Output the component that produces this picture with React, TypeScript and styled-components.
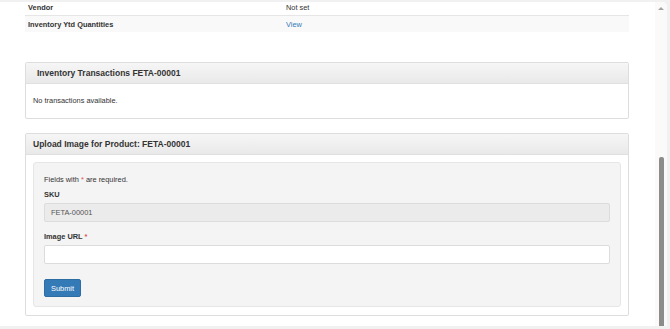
import React from 'react';
import styled, { createGlobalStyle } from 'styled-components';

const GlobalStyle = createGlobalStyle`
  html, body {
    margin: 0;
    padding: 0;
    background: #f1f1f1;
  }
  body {
    font-family: 'Liberation Sans', Arial, sans-serif;
    color: #333333;
  }
`;

const details = [
  { label: 'Vendor', value: 'Not set', link: false },
  { label: 'Inventory Ytd Quantities', value: 'View', link: true },
];

const App: React.FC = () => {
  return (
    <>
      <GlobalStyle />
      <Page>
        <Frame>
          <Content>
            <DetailTable>
              {details.map((row, i) => (
                <DetailRow key={row.label} striped={i % 2 === 1}>
                  <LabelCell>{row.label}</LabelCell>
                  <ValueCell>{row.link ? <Link href="#">{row.value}</Link> : row.value}</ValueCell>
                </DetailRow>
              ))}
            </DetailTable>

            <Panel spacing={30}>
              <PanelHeading indent={11}>
                <PanelTitle>Inventory Transactions FETA-00001</PanelTitle>
              </PanelHeading>
              <PanelBody>
                <EmptyText>No transactions available.</EmptyText>
              </PanelBody>
            </Panel>

            <Panel spacing={14}>
              <PanelHeading indent={7}>
                <PanelTitle>Upload Image for Product: FETA-00001</PanelTitle>
              </PanelHeading>
              <PanelBody>
                <Well>
                  <Note>
                    Fields with <Required>*</Required> are required.
                  </Note>
                  <Field>
                    <FieldLabel>SKU</FieldLabel>
                    <TextInput disabled value="FETA-00001" readOnly />
                  </Field>
                  <Field>
                    <FieldLabel>
                      Image URL <Required>*</Required>
                    </FieldLabel>
                    <TextInput defaultValue="" />
                  </Field>
                  <SubmitButton type="button">Submit</SubmitButton>
                </Well>
              </PanelBody>
            </Panel>
          </Content>

          <ScrollTrack>
            <ScrollArrow />
            <ScrollThumb />
          </ScrollTrack>
        </Frame>
      </Page>
    </>
  );
};

const Page = styled.div`
  height: 329px;
  width: 670px;
  padding: 2px 3px 3px 0;
  box-sizing: border-box;
  overflow: hidden;
`;

const Frame = styled.div`
  display: flex;
  height: 100%;
  background: #ffffff;
  border-top-right-radius: 5px;
  overflow: hidden;
`;

const Content = styled.div`
  flex: 1;
  padding: 0 26px 0 25px;
  margin-top: -4px;
  min-width: 0;
`;

const DetailTable = styled.div`
  display: flex;
  flex-direction: column;
`;

const DetailRow = styled.div<{ striped: boolean }>`
  display: grid;
  grid-template-columns: 261px 1fr;
  height: 16px;
  align-items: center;
  background: ${(p) => (p.striped ? '#f9f9f9' : 'transparent')};
  border-top: 1px solid ${(p) => (p.striped ? '#e6e6e6' : 'transparent')};
  font-size: 7.4px;
`;

const LabelCell = styled.div`
  padding-left: 3px;
  font-weight: bold;
  color: #333333;
`;

const ValueCell = styled.div`
  color: #333333;
`;

const Link = styled.a`
  color: #337ab7;
  text-decoration: none;
`;

const Panel = styled.div<{ spacing: number }>`
  border: 1px solid #dddddd;
  border-radius: 2px;
  margin-top: ${(p) => p.spacing}px;
`;

const PanelHeading = styled.div<{ indent: number }>`
  height: 20px;
  display: flex;
  align-items: center;
  padding-left: ${(p) => p.indent}px;
  background: linear-gradient(to bottom, #f6f6f6 0%, #e9e9e9 100%);
  border-bottom: 1px solid #e0e0e0;
`;

const PanelTitle = styled.h3`
  margin: 0;
  font-size: 8.5px;
  font-weight: bold;
  color: #333333;
`;

const PanelBody = styled.div`
  padding: 7px 7px 8px;
`;

const EmptyText = styled.p`
  margin: 5px 0 4px;
  font-size: 7.4px;
  line-height: 10px;
  color: #333333;
`;

const Well = styled.div`
  background: #f4f4f4;
  border: 1px solid #e6e6e6;
  border-radius: 3px;
  padding: 12px 10px 9px;
`;

const Note = styled.p`
  margin: 0 0 5px;
  font-size: 7.4px;
  line-height: 10px;
  color: #333333;
`;

const Required = styled.span`
  color: #d9534f;
`;

const Field = styled.div`
  display: flex;
  flex-direction: column;
  margin-bottom: 10px;
`;

const FieldLabel = styled.label`
  font-size: 7.4px;
  line-height: 10px;
  font-weight: bold;
  color: #333333;
  margin-bottom: 3px;
`;

const TextInput = styled.input`
  height: 19px;
  box-sizing: border-box;
  padding: 0 6px;
  border: 1px solid #dcdcdc;
  border-radius: 2px;
  background: #ffffff;
  font-family: 'Liberation Sans', Arial, sans-serif;
  font-size: 7.4px;
  color: #555555;
  outline: none;

  &:disabled {
    background: #ebebeb;
    color: #555555;
  }
`;

const SubmitButton = styled.button`
  margin-top: 15px;
  width: 37px;
  height: 18px;
  padding: 0;
  border: 1px solid #2e6da4;
  border-radius: 2px;
  background: #337ab7;
  color: #ffffff;
  font-family: 'Liberation Sans', Arial, sans-serif;
  font-size: 7.4px;
  display: block;
`;

const ScrollTrack = styled.div`
  width: 12px;
  background: #fafafa;
  display: flex;
  flex-direction: column;
  align-items: center;
`;

const ScrollArrow = styled.div`
  margin-top: 5px;
  width: 0;
  height: 0;
  border-left: 3px solid transparent;
  border-right: 3px solid transparent;
  border-bottom: 3px solid #a3a3a3;
`;

const ScrollThumb = styled.div`
  margin-top: 147px;
  width: 5px;
  flex: 1;
  background: #8c8c8c;
  border-radius: 2px 2px 0 0;
`;

export default App;
